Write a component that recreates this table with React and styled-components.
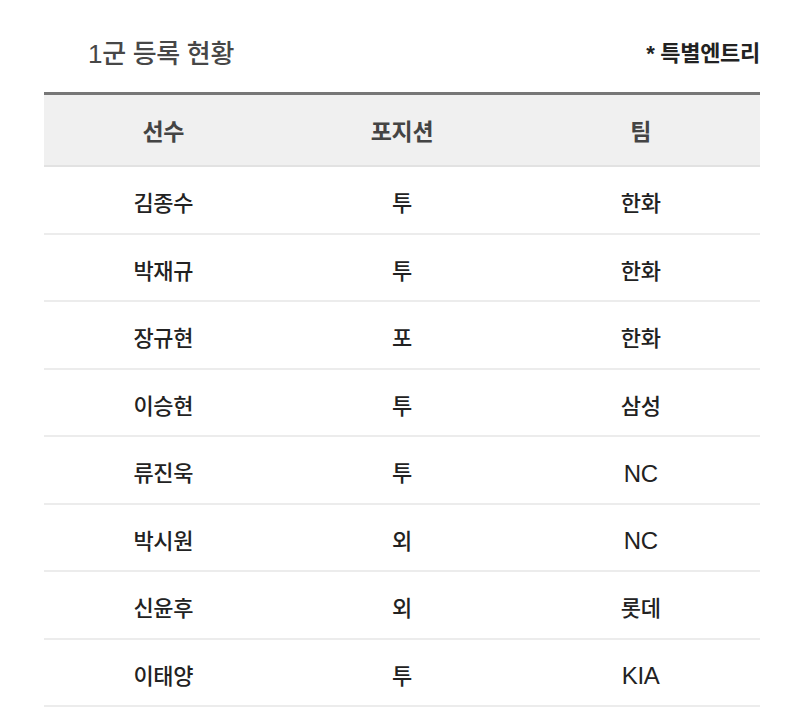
import React from "react";
import styled, { createGlobalStyle } from "styled-components";

const players = [
  ["김종수", "투", "한화"],
  ["박재규", "투", "한화"],
  ["장규현", "포", "한화"],
  ["이승현", "투", "삼성"],
  ["류진욱", "투", "NC"],
  ["박시원", "외", "NC"],
  ["신윤후", "외", "롯데"],
  ["이태양", "투", "KIA"],
];

const isLatin = (s) => /^[A-Za-z]+$/.test(s);

export default function App() {
  return (
    <>
      <GlobalStyle />
      <Page>
        <TopBar>
          <Title>1군 등록 현황</Title>
          <Note>* 특별엔트리</Note>
        </TopBar>
        <Table>
          <HeadRow>
            <HeadCell>선수</HeadCell>
            <HeadCell>포지션</HeadCell>
            <HeadCell>팀</HeadCell>
          </HeadRow>
          {players.map((p) => (
            <Row key={p[0]}>
              {p.map((v, i) => (
                <Cell key={i} $latin={isLatin(v)}>
                  {v}
                </Cell>
              ))}
            </Row>
          ))}
        </Table>
      </Page>
    </>
  );
}

const GlobalStyle = createGlobalStyle`
  body {
    margin: 0;
    background: #fff;
    font-family: "Liberation Sans", "Noto Sans CJK KR", sans-serif;
  }
`;

const Page = styled.div`
  width: 800px;
  padding: 0 40px 0 44px;
  box-sizing: border-box;
`;

const TopBar = styled.div`
  display: flex;
  justify-content: space-between;
  align-items: center;
  height: 92px;
  padding: 10px 0 0 44px;
  box-sizing: border-box;
`;

const Title = styled.h2`
  margin: 0;
  font-size: 26px;
  font-weight: 500;
  color: #474747;
  letter-spacing: -0.3px;
`;

const Note = styled.span`
  font-size: 22px;
  font-weight: 700;
  color: #222;
  letter-spacing: -0.3px;
`;

const Table = styled.div`
  border-top: 3px solid #777;
`;

const HeadRow = styled.div`
  display: grid;
  grid-template-columns: repeat(3, 1fr);
  height: 72px;
  background: #f0f0f0;
  border-bottom: 2px solid #e2e2e2;
  box-sizing: border-box;
`;

const Row = styled.div`
  display: grid;
  grid-template-columns: repeat(3, 1fr);
  height: 67.5px;
  border-bottom: 2px solid #ececec;
  box-sizing: border-box;
`;

const HeadCell = styled.div`
  display: flex;
  align-items: center;
  justify-content: center;
  font-size: 23px;
  font-weight: 700;
  color: #444;
  letter-spacing: -0.3px;
`;

const Cell = styled.div`
  display: flex;
  align-items: center;
  justify-content: center;
  padding-top: ${(p) => (p.$latin ? "8px" : "3px")};
  font-size: ${(p) => (p.$latin ? "24px" : "22px")};
  font-weight: 500;
  color: #222;
  letter-spacing: -0.3px;
`;
